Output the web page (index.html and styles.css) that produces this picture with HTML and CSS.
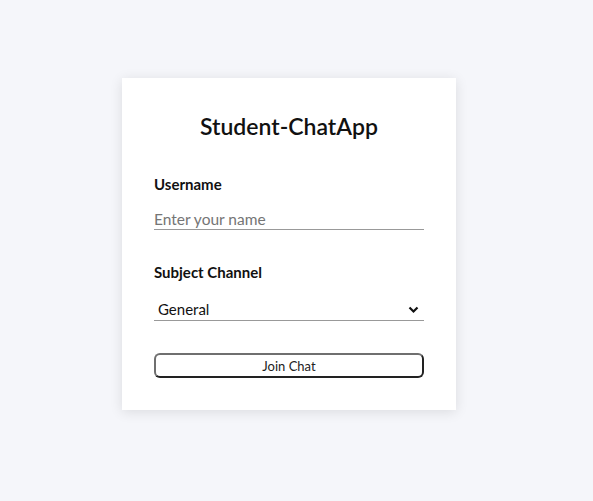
FILE: index.html
```html
<!DOCTYPE html>
<html lang="en">
<head>
<meta charset="utf-8">
<title>Student-ChatApp</title>
<link rel="stylesheet" href="styles.css">
</head>
<body>
<main class="page">
  <form class="card">
    <h1 class="title">Student-ChatApp</h1>
    <div class="field">
      <label class="label" for="username">Username</label>
      <input class="input" id="username" type="text" placeholder="Enter your name">
    </div>
    <div class="field">
      <label class="label label-select" for="channel">Subject Channel</label>
      <div class="select-wrap">
        <select class="select" id="channel">
          <option>General</option>
        </select>
        <svg class="chevron" width="11" height="8" viewBox="0 0 11 8"><path d="M1.5 1.5 L5.5 5.5 L9.5 1.5" fill="none" stroke="#111" stroke-width="2.2"/></svg>
      </div>
    </div>
    <button class="button" type="button">Join Chat</button>
  </form>
</main>
</body>
</html>
```
FILE: styles.css
```css
html, body {
  margin: 0;
  padding: 0;
  height: 100%;
}
body {
  background: #f5f6fa;
  font-family: Lato, "Noto Sans", sans-serif;
  color: #111;
}
.page {
  display: flex;
  justify-content: center;
  padding-top: 78px;
  padding-right: 15px;
}
.card {
  width: 334px;
  box-sizing: border-box;
  background: #fff;
  padding: 30px 32px 32px;
  box-shadow: 0 2px 12px rgba(0,0,0,0.11);
  display: flex;
  flex-direction: column;
}
.title {
  margin: 0 0 30px;
  font-size: 23px;
  font-weight: 600;
  text-align: center;
  line-height: 36px;
}
.field {
  display: flex;
  flex-direction: column;
  margin-bottom: 32px;
}
.label {
  font-size: 15px;
  font-weight: 700;
  line-height: 20px;
  margin-bottom: 14px;
}
.label-select {
  margin-bottom: 16px;
}
.input {
  border: none;
  border-bottom: 1px solid #999;
  font-family: inherit;
  font-size: 15.5px;
  padding: 0;
  height: 22px;
  box-sizing: border-box;
  outline: none;
  color: #111;
}
.input::placeholder {
  color: #757575;
}
.select-wrap {
  position: relative;
}
.select {
  appearance: none;
  -webkit-appearance: none;
  width: 100%;
  border: none;
  border-bottom: 1px solid #999;
  border-radius: 0;
  background: #fff;
  font-family: inherit;
  font-size: 15px;
  padding: 0 0 0 4px;
  height: 23px;
  color: #111;
  outline: none;
}
.chevron {
  position: absolute;
  right: 5px;
  top: 8px;
  pointer-events: none;
}
.button {
  height: 25px;
  border: 2px solid;
  border-color: #6f6f6f #222 #222 #6f6f6f;
  border-radius: 6px;
  background: #fff;
  font-family: inherit;
  font-size: 13px;
  color: #222;
}
```
